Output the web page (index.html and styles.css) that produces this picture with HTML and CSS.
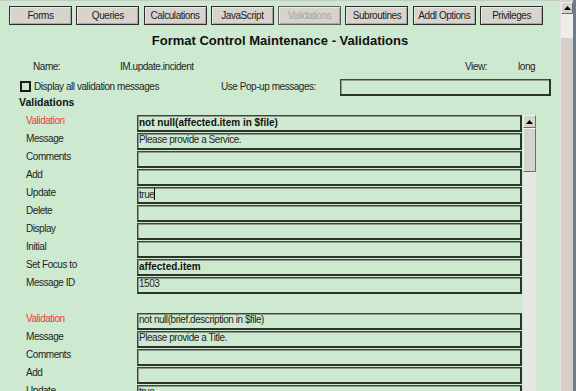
FILE: index.html
```html
<!DOCTYPE html>
<html lang="en">
<head>
    <meta charset="UTF-8">
    <title>Format Control Maintenance - Validations</title>
    <link rel="stylesheet" href="styles.css">
</head>
<body>

    <div class="window">
        <div class="main">

            <div class="tabs">
                <button class="tab">Forms</button>
                <button class="tab">Queries</button>
                <button class="tab">Calculations</button>
                <button class="tab">JavaScript</button>
                <button class="tab tab-disabled">Validations</button>
                <button class="tab">Subroutines</button>
                <button class="tab">Addl Options</button>
                <button class="tab">Privileges</button>
            </div>

            <h1 class="title">Format Control Maintenance - Validations</h1>

            <div class="info-row">
                <span class="name-label">Name:</span>
                <span class="name-value">IM.update.incident</span>
                <span class="view-label">View:</span>
                <span class="view-value">long</span>
            </div>

            <div class="options-row">
                <label class="check-option">
                    <span class="checkbox"></span>
                    Display all validation messages
                </label>
                <span class="popup-label">Use Pop-up messages:</span>
                <span class="field popup-field"></span>
            </div>

            <h2 class="section">Validations</h2>

            <div class="list-area">
                <div class="list">
                    <!-- first validation -->
                    <span class="label label-red">Validation</span>
                    <span class="field field-bold">not null(affected.item in $file)</span>
                    <span class="label">Message</span>
                    <span class="field">Please provide a Service.</span>
                    <span class="label">Comments</span>
                    <span class="field"></span>
                    <span class="label">Add</span>
                    <span class="field"></span>
                    <span class="label">Update</span>
                    <span class="field">true<i class="caret"></i></span>
                    <span class="label">Delete</span>
                    <span class="field"></span>
                    <span class="label">Display</span>
                    <span class="field"></span>
                    <span class="label">Initial</span>
                    <span class="field"></span>
                    <span class="label">Set Focus to</span>
                    <span class="field field-bold">affected.item</span>
                    <span class="label">Message ID</span>
                    <span class="field">1503</span>

                    <span class="spacer"></span>

                    <!-- second validation -->
                    <span class="label label-red">Validation</span>
                    <span class="field">not null(brief.description in $file)</span>
                    <span class="label">Message</span>
                    <span class="field">Please provide a Title.</span>
                    <span class="label">Comments</span>
                    <span class="field"></span>
                    <span class="label">Add</span>
                    <span class="field"></span>
                    <span class="label">Update</span>
                    <span class="field">true</span>
                </div>

                <div class="vscroll">
                    <div class="scroll-btn">
                        <svg width="7" height="4" viewBox="0 0 7 4"><path d="M0 4 L3.5 0 L7 4 Z" fill="#000"/></svg>
                    </div>
                    <div class="scroll-thumb"></div>
                    <div class="scroll-track"></div>
                </div>
            </div>

        </div>

        <div class="outer-scroll">
            <div class="scroll-btn outer-btn">
                <svg width="7" height="4" viewBox="0 0 7 4"><path d="M0 4 L3.5 0 L7 4 Z" fill="#000"/></svg>
            </div>
            <div class="outer-light"></div>
            <div class="outer-track"></div>
        </div>
    </div>

</body>
</html>
```
FILE: styles.css
```css
body {
    margin: 0;
    background-color: #cde9d0;
    font-family: "Liberation Sans", Arial, sans-serif;
    font-size: 10px;
    letter-spacing: -0.45px;
    color: #1f1f1f;
    overflow: hidden;
}

.window {
    display: flex;
    height: 391px;
    overflow: hidden;
}

.main {
    width: 560px;
    border-top: 1px solid #c4cbc4;
}

/* top buttons */
.tabs {
    display: flex;
    gap: 4.3px;
    padding: 5px 0 0 9px;
}

.tab {
    width: 63px;
    height: 19px;
    padding: 0;
    box-sizing: border-box;
    border: 1px solid #2c2c2c;
    background: #d7d4cd;
    box-shadow: inset 1px 1px 0 #ece9e4, inset -1px -1px 0 #aaa69e;
    font-family: inherit;
    font-size: 10px;
    letter-spacing: -0.45px;
    white-space: nowrap;
    color: #1c1c1c;
}

.tab-disabled {
    color: #a8a49c;
    border-color: #5e5e5e;
}

.title {
    margin: 8px 0 0;
    font: bold 13px "Liberation Sans", Arial, sans-serif;
    letter-spacing: 0;
    line-height: 16px;
    text-align: center;
    color: #111;
}

.info-row {
    display: flex;
    margin-top: 11px;
    padding-left: 33px;
    line-height: 14px;
}

.name-label { width: 87px; }
.name-value { width: 345px; }
.view-label { width: 53px; }

.options-row {
    display: flex;
    align-items: flex-start;
    margin-top: 5px;
    padding-left: 20px;
    height: 17px;
}

.check-option {
    display: flex;
    align-items: center;
    width: 201px;
    height: 12px;
    line-height: 12px;
    margin-top: 2px;
}

.checkbox {
    width: 11px;
    height: 11px;
    box-sizing: border-box;
    border: 2px solid #1a1a1a;
    margin: -2px 3px 0 0;
}

.popup-label {
    width: 119px;
    line-height: 12px;
    margin-top: 2px;
}

.field {
    display: block;
    height: 17px;
    box-sizing: border-box;
    border: 1px solid #3f463f;
    border-right: 2px solid #2c322c;
    border-bottom: 2px solid #2c322c;
    box-shadow: inset 1px 1px 0 #8e998e;
    padding-left: 1px;
    line-height: 12px;
    white-space: nowrap;
    overflow: hidden;
}

.popup-field {
    width: 211px;
}

.section {
    margin: 0;
    padding-left: 19px;
    font: bold 10.5px "Liberation Sans", Arial, sans-serif;
    letter-spacing: 0;
    line-height: 12px;
    color: #111;
}

/* validation list */
.list-area {
    display: flex;
    margin-top: 7px;
}

.list {
    width: 496px;
    padding-left: 26px;
    display: grid;
    grid-template-columns: 111px 385px;
    grid-auto-rows: 17px;
    row-gap: 1px;
}

.label {
    line-height: 12px;
}

.label-red {
    color: #ee3a3a;
}

.field-bold {
    font: bold 10px "Liberation Sans", Arial, sans-serif;
    letter-spacing: 0;
    line-height: 14px;
    color: #111;
}

.caret {
    display: inline-block;
    width: 1px;
    height: 12px;
    background: #111;
    vertical-align: -2px;
}

.spacer {
    grid-column: 1 / 3;
}

/* scrollbars */
.vscroll {
    width: 13px;
    margin-left: 1px;
    height: 276px;
    display: flex;
    flex-direction: column;
}

.scroll-btn {
    height: 13px;
    box-sizing: border-box;
    background: #d6d3cc;
    border: 1px solid;
    border-color: #f4f3ef #6f6c66 #6f6c66 #f4f3ef;
    display: flex;
    align-items: center;
    justify-content: center;
}

.scroll-thumb {
    height: 44px;
    box-sizing: border-box;
    background: #d6d3cc;
    border: 1px solid;
    border-color: #f4f3ef #6f6c66 #6f6c66 #f4f3ef;
}

.scroll-track {
    flex: 1;
    background: #e8e7e3;
}

.outer-scroll {
    width: 16px;
    display: flex;
    flex-direction: column;
    border-left: 1px solid #e4e2dc;
    border-right: 3px solid #6f7a9a;
    box-sizing: border-box;
    background: #d4d0c8;
}

.outer-btn {
    margin-top: 2px;
    height: 12px;
}

.outer-light {
    height: 24px;
    background: #eeede9;
}

.outer-track {
    flex: 1;
    background: #d4d0c8;
}
```
